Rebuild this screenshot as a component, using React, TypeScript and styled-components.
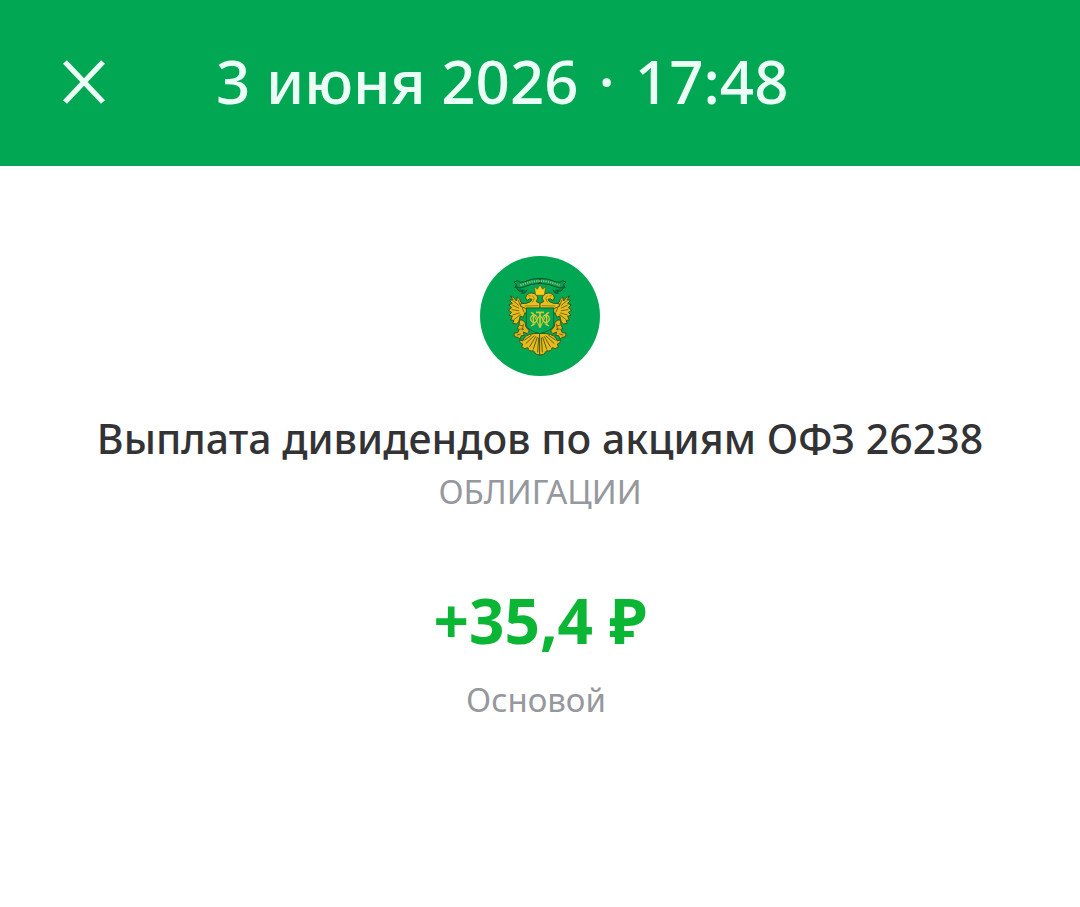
import React from "react";
import styled, { createGlobalStyle } from "styled-components";

interface Operation {
    date: string;
    time: string;
    title: string;
    category: string;
    amount: string;
    account: string;
}

const operation: Operation = {
    date: "3 июня 2026",
    time: "17:48",
    title: "Выплата дивидендов по акциям ОФЗ 26238",
    category: "ОБЛИГАЦИИ",
    amount: "+35,4 ₽",
    account: "Основой",
};

const GlobalStyle = createGlobalStyle`
    * {
        box-sizing: border-box;
    }

    body {
        margin: 0;
        background-color: #ffffff;
        font-family: "Noto Sans", "Open Sans", sans-serif;
    }
`;

const Header = styled.header`
    display: flex;
    align-items: center;
    gap: 96px;
    height: 166px;
    padding: 0 48px;
    background-color: #02a753;
`;

const CloseButton = styled.button`
    display: flex;
    align-items: center;
    justify-content: center;
    width: 72px;
    height: 72px;
    padding: 0;
    border: none;
    background: none;
    color: #ecfff6;
    cursor: pointer;
`;

const DateTitle = styled.h1`
    display: flex;
    gap: 20px;
    margin: 0;
    padding-bottom: 4px;
    color: #ecfff6;
    font-size: 60px;
    font-weight: 500;
    line-height: 72px;
    white-space: nowrap;
`;

const Content = styled.main`
    display: flex;
    flex-direction: column;
    align-items: center;
    padding: 90px 24px;
    text-align: center;
`;

const Title = styled.h2`
    margin: 32px 0 0;
    color: #333335;
    font-size: 41px;
    font-weight: 500;
    line-height: 60px;
`;

const Caption = styled.p`
    margin: 0;
    color: #95989d;
    font-size: 33px;
    font-weight: 400;
    line-height: 48px;
`;

const Amount = styled.p`
    margin: 64px 0 16px;
    color: #0ab634;
    font-size: 62px;
    font-weight: 700;
    line-height: 80px;
`;

const Account = styled(Caption)`
    padding-right: 8px;
`;

const CloseIcon = () => (
    <svg width="48" height="48" viewBox="0 0 48 48" fill="none" aria-hidden="true">
        <path d="M5 3 L43 43 M43 3 L5 43" stroke="currentColor" strokeWidth="5.4" />
    </svg>
);

// left half of the eagle, the right one is its mirror
const EagleHalf = () => (
    <g strokeLinejoin="round" strokeLinecap="round">
        <path
            d="M133 108 L142 104 Q150 111 162 108 Q184 97 210 97 V112 Q184 113 164 122 Q149 129 141 123 L134 125 L139 117 Z"
            fill="#0b9a4f"
            stroke="#08522c"
            strokeWidth="3"
        />
        <path d="M140 126 Q144 140 160 134 L155 142 Q166 145 171 132" fill="#078443" stroke="#08522c" strokeWidth="3" />
        <path
            d="M122 150 Q133 153 139 165 L142 153 Q151 157 152 168 Q160 176 172 178 L172 204 L165 200 L160 214 L151 210 L146 228 L139 234 L128 232 L132 223 L122 222 L127 211 L117 208 L125 199 L115 193 L125 185 L116 176 L127 173 L118 162 L128 162 Z"
            fill="#e8bd1b"
            stroke="#3a5a1b"
            strokeWidth="3"
        />
        <path
            d="M129 164 L146 178 M128 178 L146 186 M126 191 L146 194 M128 207 L148 201 M133 220 L151 206 M144 162 L152 180 M157 186 L162 198"
            stroke="#7a6a16"
            strokeWidth="3"
        />
        <path
            d="M167 155 Q170 140 186 141 Q202 144 203 157 L199 167 L210 172 V187 H166 L152 181 L152 173 Q170 174 182 167 L186 160 L179 158 L172 163 Z"
            fill="#ecc01c"
            stroke="#3a5a1b"
            strokeWidth="3"
        />
        <path d="M188 150 L193 157 L188 168 M166 180 L204 179 M176 149 L181 150" fill="none" stroke="#6d6017" strokeWidth="2" />
        <path
            d="M150 222 Q160 220 165 230 L168 243 L178 255 L172 263 L160 258 L163 268 L154 269 L150 279 L143 274 L133 272 L132 261 L143 260 L148 250 L141 248 L146 240 Z"
            fill="#e2b61a"
            stroke="#3a5a1b"
            strokeWidth="3"
        />
        <path d="M149 237 L158 240 M152 249 L161 250 M142 267 L151 264 M160 235 L157 252" stroke="#6d6017" strokeWidth="3" />
        <path
            d="M210 262 L190 263 Q164 266 158 285 L149 281 L150 290 L158 294 L155 303 Q164 312 174 305 Q176 318 190 314 L199 325 L210 327 Z"
            fill="#e6bb1b"
            stroke="#3a5a1b"
            strokeWidth="3"
        />
        <path
            d="M192 270 L168 292 M197 272 L179 302 M202 274 L190 309 M206 276 L203 318 M184 268 L164 282"
            stroke="#5c5f18"
            strokeWidth="3"
        />
    </g>
);

const Emblem = () => (
    <svg width="120" height="120" viewBox="30 30 360 360" role="img" aria-label="Министерство финансов">
        <circle cx="210" cy="210" r="180" fill="#02a753" />
        <EagleHalf />
        <g transform="matrix(-1 0 0 1 420 0)">
            <EagleHalf />
        </g>
        <path d="M151 118 Q181 105 210 105 Q239 105 269 118" fill="none" stroke="#75ca75" strokeWidth="6" strokeDasharray="4 3" />
        <path
            d="M193 122 L202 130 L210 117 L218 130 L227 122 L223 148 H197 Z"
            fill="#f8cd1d"
            stroke="#5a5b18"
            strokeWidth="2"
        />
        <path d="M169 186 H251 V239 Q246 253 210 263 Q174 253 169 239 Z" fill="#02a753" stroke="#086a32" strokeWidth="3" />
        <g fill="none" stroke="#d4c936" strokeWidth="4">
            <path d="M183 199 L190 203 V236 L183 240 M237 199 L230 203 V236 L237 240" />
            <path d="M190 203 L210 246 L230 203 M191 238 L210 207 L229 238" strokeWidth="3" />
            <path d="M210 200 V243 M198 199 H222" strokeWidth="5" />
            <ellipse cx="192" cy="218" rx="10" ry="11" />
            <ellipse cx="228" cy="218" rx="10" ry="11" />
        </g>
    </svg>
);

const App: React.FC = () => {
    return (
        <>
            <GlobalStyle />
            <Header>
                <CloseButton type="button" aria-label="Закрыть">
                    <CloseIcon />
                </CloseButton>
                <DateTitle>
                    <span>{operation.date}</span>
                    <span>·</span>
                    <span>{operation.time}</span>
                </DateTitle>
            </Header>
            <Content>
                <Emblem />
                <Title>{operation.title}</Title>
                <Caption>{operation.category}</Caption>
                <Amount>{operation.amount}</Amount>
                <Account>{operation.account}</Account>
            </Content>
        </>
    );
};

export default App;
